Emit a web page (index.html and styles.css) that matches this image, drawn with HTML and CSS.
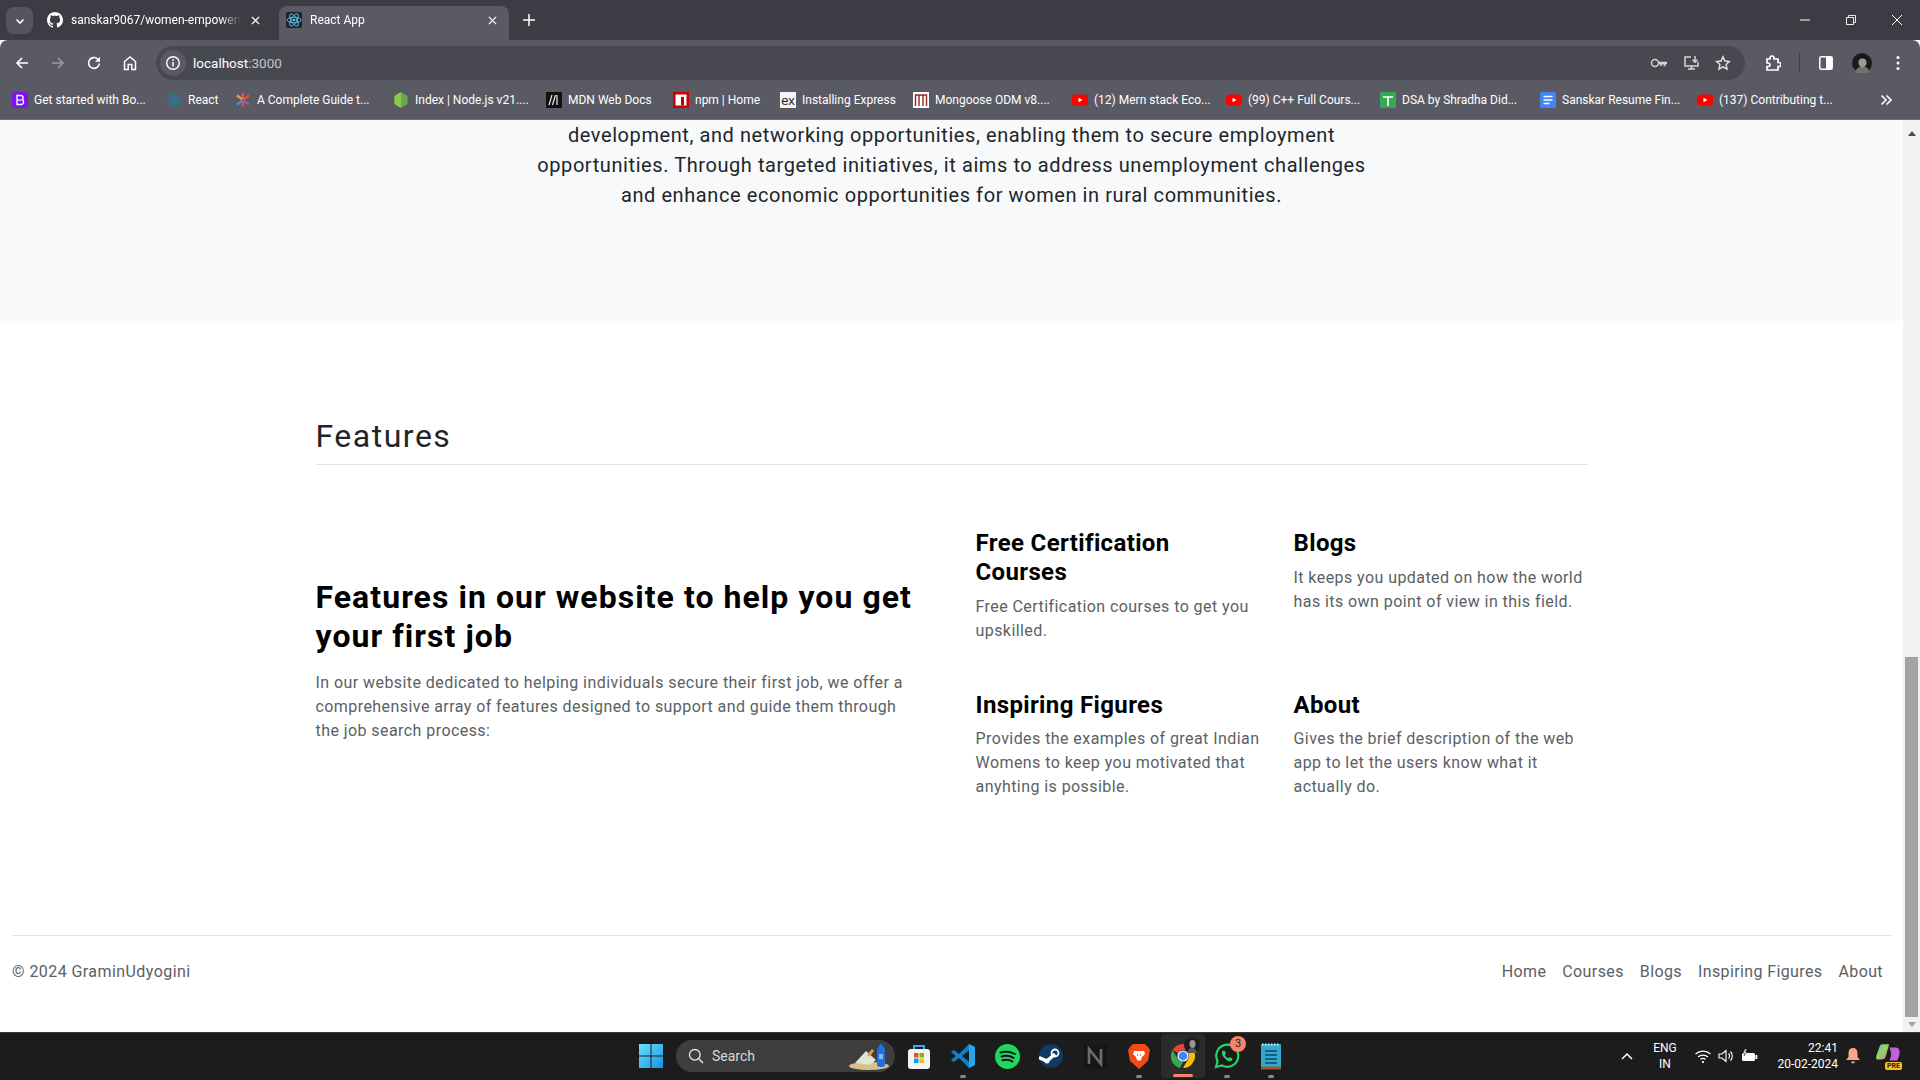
FILE: index.html
```html
<!DOCTYPE html>
<html lang="en">

<head>
    <meta charset="utf-8">
    <title>React App</title>
    <link rel="stylesheet" href="styles.css">
</head>

<body>
    <div class="tabstrip">
        <div class="tablist-btn">
            <svg width="12" height="12" viewBox="0 0 12 12"><path d="M2.5 4.500 6 8l3.500-3.500" fill="none" stroke="#fff" stroke-width="1.600"/></svg>
        </div>
        <div class="tab">
            <svg class="favicon" viewBox="0 0 16 16"><path fill="#fff" d="M8 0C3.600 0 0 3.600 0 8c0 3.500 2.300 6.500 5.500 7.600.4.100.5-.2.5-.4v-1.400c-2.200.5-2.700-1-2.700-1-.4-.9-.9-1.200-.9-1.200-.7-.5.100-.5.100-.5.800.1 1.200.8 1.200.8.700 1.200 1.900.9 2.300.7.100-.5.300-.9.500-1.100-1.800-.2-3.600-.9-3.600-4 0-.9.300-1.600.8-2.100-.1-.2-.4-1 .1-2.100 0 0 .7-.2 2.200.8.600-.2 1.300-.3 2-.3s1.400.1 2 .3c1.500-1 2.200-.8 2.200-.8.400 1.100.2 1.900.1 2.100.5.600.8 1.300.8 2.100 0 3.100-1.900 3.700-3.700 3.900.3.300.6.800.6 1.500v2.200c0 .2.100.5.600.4C13.700 14.500 16 11.500 16 8c0-4.400-3.600-8-8-8z"/></svg>
            <span class="tab-title">sanskar9067/women-empowerment</span>
            <svg class="tab-close" viewBox="0 0 10 10"><path d="M1 1l8 8M9 1 1 9" stroke="#fff" stroke-width="1.400"/></svg>
        </div>
        <div class="tab tab-active">
            <svg class="favicon" viewBox="0 0 16 16"><rect width="16" height="16" rx="2" fill="#20232a"/><g fill="none" stroke="#61dafb" stroke-width=".8"><ellipse cx="8" cy="8" rx="7" ry="2.800"/><ellipse cx="8" cy="8" rx="7" ry="2.800" transform="rotate(60 8 8)"/><ellipse cx="8" cy="8" rx="7" ry="2.800" transform="rotate(120 8 8)"/></g><circle cx="8" cy="8" r="1.300" fill="#61dafb"/></svg>
            <span class="tab-title">React App</span>
            <svg class="tab-close" viewBox="0 0 10 10"><path d="M1 1l8 8M9 1 1 9" stroke="#fff" stroke-width="1.400"/></svg>
        </div>
        <svg class="new-tab" width="12" height="12" viewBox="0 0 12 12"><path d="M6 0v12M0 6h12" stroke="#fff" stroke-width="1.500"/></svg>
        <div class="window-controls">
            <svg width="10" height="10" viewBox="0 0 10 10"><path d="M0 5h10" stroke="#fff"/></svg>
            <svg width="10" height="10" viewBox="0 0 10 10"><path d="M.5 2.500h7v7h-7zM2.500 2.500V.5h7v7h-2" fill="none" stroke="#fff" stroke-width=".9"/></svg>
            <svg width="10" height="10" viewBox="0 0 10 10"><path d="M0 0l10 10M10 0 0 10" stroke="#fff"/></svg>
        </div>
    </div>

    <div class="toolbar">
        <div class="nav-buttons">
            <svg width="16" height="16" viewBox="0 0 16 16"><path d="M14 8H3M8 3 3 8l5 5" fill="none" stroke="#fff" stroke-width="1.600"/></svg>
            <svg width="16" height="16" viewBox="0 0 16 16"><path d="M2 8h11M8 3l5 5-5 5" fill="none" stroke="#9a9aa2" stroke-width="1.600"/></svg>
            <svg width="16" height="16" viewBox="0 0 16 16"><path d="M13.300 8.500A5.400 5.400 0 1 1 11.800 4.200L13.500 6" fill="none" stroke="#fff" stroke-width="1.600"/><path d="M14 1.800v5h-5z" fill="#fff"/></svg>
            <svg width="16" height="16" viewBox="0 0 16 16"><path d="M2.500 14.500V6.500L8 2l5.500 4.500v8H9.800V9.500H6.200v5z" fill="none" stroke="#fff" stroke-width="1.500"/></svg>
        </div>
        <div class="omnibox">
            <div class="site-info">
                <svg width="16" height="16" viewBox="0 0 16 16"><circle cx="8" cy="8" r="6.300" fill="none" stroke="#fff" stroke-width="1.400"/><path d="M8 7v4.500" stroke="#fff" stroke-width="1.500"/><circle cx="8" cy="4.900" r=".9" fill="#fff"/></svg>
            </div>
            <span class="url">localhost<span class="url-port">:3000</span></span>
            <div class="omni-icons">
                <svg width="18" height="16" viewBox="0 0 18 16"><circle cx="5" cy="8" r="3.500" fill="none" stroke="#d4d4d8" stroke-width="1.500"/><path d="M8.500 6.800H17v2.400h-1.500v2h-2v-2H12v1.500h-2V9.200H8.500z" fill="#d4d4d8"/></svg>
                <svg width="17" height="16" viewBox="0 0 17 16"><path d="M8 2H2v9h13V7M5 14h7M8.500 11v3" fill="none" stroke="#d4d4d8" stroke-width="1.500"/><path d="M12 1v6M9.500 4.800 12 7.300l2.500-2.500" fill="none" stroke="#d4d4d8" stroke-width="1.500"/></svg>
                <svg width="16" height="16" viewBox="0 0 16 16"><path d="M8 1.800 9.900 6l4.600.5-3.400 3.100.9 4.500L8 11.800l-4 2.300.9-4.500L1.500 6.500 6.100 6z" fill="none" stroke="#e4e4e8" stroke-width="1.400"/></svg>
            </div>
        </div>
        <div class="toolbar-right">
            <svg class="extension-icon" width="16" height="16" viewBox="0 0 16 16"><path d="M2 4h3V3a2 2 0 0 1 4 0v1h4v3.500h1a2 2 0 0 1 0 4h-1V15H2v-3.500h1.200a1.700 1.700 0 0 0 0-3.500H2z" fill="none" stroke="#fff" stroke-width="1.700"/></svg>
            <span class="toolbar-divider"></span>
            <svg class="panel-icon" width="14" height="16" viewBox="0 0 14 16"><rect x=".8" y="1.800" width="12.400" height="12.400" rx="1.500" fill="none" stroke="#fff" stroke-width="1.500"/><rect x="7" y="2" width="6" height="12" fill="#fff"/></svg>
            <svg class="avatar" width="20" height="20" viewBox="0 0 20 20"><circle cx="10" cy="10" r="10" fill="#1c1b1c"/><path d="M3 20c1-5 4-6.500 7.500-6.500S17 15 17.500 20z" fill="#77716e"/><ellipse cx="10.500" cy="9.500" rx="4" ry="5" fill="#a09894"/><path d="M6 8c0-4 3-5 5-5s4 2 3.500 5c-1-2-2-2.500-4-2.500S7 6 6 8z" fill="#151415"/></svg>
            <svg class="menu-icon" width="4" height="16" viewBox="0 0 4 16"><circle cx="2" cy="2.500" r="1.500" fill="#fff"/><circle cx="2" cy="8" r="1.500" fill="#fff"/><circle cx="2" cy="13.500" r="1.500" fill="#fff"/></svg>
        </div>
    </div>

    <div class="bookmarks">
        <div class="bookmark">
            <svg class="favicon" viewBox="0 0 16 16"><rect width="16" height="16" rx="3" fill="#7a12f2"/><path d="M5 3.500h3.800c3 0 3 3.800.8 4.300 2.800.4 2.800 4.700-.6 4.700H5z" fill="none" stroke="#fff" stroke-width="1.300"/><path d="M5 8h4" stroke="#fff" stroke-width="1.200"/></svg>
            <span>Get started with Bo...</span>
        </div>
        <div class="bookmark">
            <svg class="favicon" viewBox="0 0 16 16"><g fill="none" stroke="#1f7f9f" stroke-width=".9"><ellipse cx="8" cy="8" rx="7" ry="2.800"/><ellipse cx="8" cy="8" rx="7" ry="2.800" transform="rotate(60 8 8)"/><ellipse cx="8" cy="8" rx="7" ry="2.800" transform="rotate(120 8 8)"/></g><circle cx="8" cy="8" r="1.500" fill="#1f7f9f"/></svg>
            <span>React</span>
        </div>
        <div class="bookmark">
            <svg class="favicon" viewBox="0 0 16 16"><g stroke-width="2.200"><path d="M8 1v6.500" stroke="#e8553e"/><path d="M8 8.500V15" stroke="#d0506c"/><path d="M2 3.500 7.300 7.300" stroke="#e8a33e"/><path d="M14 3.500 8.700 7.300" stroke="#e8553e"/><path d="M2 12.500 7.300 8.700" stroke="#3aa0b8"/><path d="M14 12.500 8.700 8.700" stroke="#9a5ab0"/></g></svg>
            <span>A Complete Guide t...</span>
        </div>
        <div class="bookmark">
            <svg class="favicon" viewBox="0 0 16 16"><path d="M8 0 14.500 4v8L8 16l-6.500-4V4z" fill="#6aa84f"/><path d="M8 0v16l-6.500-4V4z" fill="#8cc84b"/></svg>
            <span>Index | Node.js v21....</span>
        </div>
        <div class="bookmark">
            <svg class="favicon" viewBox="0 0 16 16"><rect width="16" height="16" fill="#111"/><path d="M3 13 6 3M6.500 13l3-10M11 3v10" stroke="#e8e8e8" stroke-width="1.200" fill="none"/></svg>
            <span>MDN Web Docs</span>
        </div>
        <div class="bookmark">
            <svg class="favicon" viewBox="0 0 16 16"><rect width="16" height="16" fill="#c00"/><rect x="2.500" y="2.500" width="11" height="11" fill="#fff"/><rect x="8" y="5" width="3" height="8.500" fill="#c00"/></svg>
            <span>npm | Home</span>
        </div>
        <div class="bookmark">
            <svg class="favicon" viewBox="0 0 16 16"><rect width="16" height="16" fill="#f4f4f4"/><text x="8" y="12.500" text-anchor="middle" class="favicon-text">ex</text></svg>
            <span>Installing Express</span>
        </div>
        <div class="bookmark">
            <svg class="favicon" viewBox="0 0 16 16"><rect width="16" height="16" fill="#fff"/><path d="M2.500 14V3h11v11M6 14V3M10 14V3" fill="none" stroke="#8a2a20" stroke-width="1.400"/></svg>
            <span>Mongoose ODM v8....</span>
        </div>
        <div class="bookmark">
            <svg class="favicon" viewBox="0 0 16 16"><rect y="2.500" width="16" height="11" rx="3" fill="#f00"/><path d="M6.500 5.700v4.600L10.500 8z" fill="#fff"/></svg>
            <span>(12) Mern stack Eco...</span>
        </div>
        <div class="bookmark">
            <svg class="favicon" viewBox="0 0 16 16"><rect y="2.500" width="16" height="11" rx="3" fill="#f00"/><path d="M6.500 5.700v4.600L10.500 8z" fill="#fff"/></svg>
            <span>(99) C++ Full Cours...</span>
        </div>
        <div class="bookmark">
            <svg class="favicon" viewBox="0 0 16 16"><rect width="16" height="16" rx="1.500" fill="#34a853"/><path d="M3 5h10M8 5v9" stroke="#fff" stroke-width="1.700"/></svg>
            <span>DSA by Shradha Did...</span>
        </div>
        <div class="bookmark">
            <svg class="favicon" viewBox="0 0 16 16"><rect width="16" height="16" rx="1.500" fill="#4285f4"/><path d="M3.500 4.500h9M3.500 8h9M3.500 11.500h6" stroke="#fff" stroke-width="1.500"/></svg>
            <span>Sanskar Resume Fin...</span>
        </div>
        <div class="bookmark">
            <svg class="favicon" viewBox="0 0 16 16"><rect y="2.500" width="16" height="11" rx="3" fill="#f00"/><path d="M6.500 5.700v4.600L10.500 8z" fill="#fff"/></svg>
            <span>(137) Contributing t...</span>
        </div>
        <svg class="bookmarks-more" width="12" height="12" viewBox="0 0 12 12"><path d="M1.500 1.500 6 6l-4.500 4.500M6.500 1.500 11 6l-4.500 4.500" fill="none" stroke="#fff" stroke-width="1.600"/></svg>
    </div>

    <div class="viewport">
        <div class="page">
            <section class="hero">
                <p class="hero-text">development, and networking opportunities, enabling them to secure employment opportunities. Through targeted initiatives, it aims to address unemployment challenges and enhance economic opportunities for women in rural communities.</p>
            </section>

            <section class="features">
                <h2 class="features-title">Features</h2>
                <div class="features-grid">
                    <div class="features-intro">
                        <h3>Features in our website to help you get your first job</h3>
                        <p>In our website dedicated to helping individuals secure their first job, we offer a comprehensive array of features designed to support and guide them through the job search process:</p>
                    </div>
                    <div class="features-cols">
                        <div class="feature">
                            <h4>Free Certification Courses</h4>
                            <p>Free Certification courses to get you upskilled.</p>
                        </div>
                        <div class="feature">
                            <h4>Blogs</h4>
                            <p>It keeps you updated on how the world has its own point of view in this field.</p>
                        </div>
                        <div class="feature">
                            <h4>Inspiring Figures</h4>
                            <p>Provides the examples of great Indian Womens to keep you motivated that anyhting is possible.</p>
                        </div>
                        <div class="feature">
                            <h4>About</h4>
                            <p>Gives the brief description of the web app to let the users know what it actually do.</p>
                        </div>
                    </div>
                </div>
            </section>

            <footer class="footer">
                <span>© 2024 GraminUdyogini</span>
                <nav class="footer-links">
                    <a>Home</a>
                    <a>Courses</a>
                    <a>Blogs</a>
                    <a>Inspiring Figures</a>
                    <a>About</a>
                </nav>
            </footer>
        </div>
        <div class="scrollbar">
            <span class="arrow-up"></span>
            <div class="scroll-track"><div class="scroll-thumb"></div></div>
            <span class="arrow-down"></span>
        </div>
    </div>

    <div class="taskbar">
        <div class="task-center">
            <svg class="win-logo" width="24" height="24" viewBox="0 0 24 24"><defs><linearGradient id="win" x1="0" y1="0" x2="1" y2="1"><stop offset="0" stop-color="#6fe0ff"/><stop offset="1" stop-color="#1592e6"/></linearGradient></defs><path fill="url(#win)" d="M0 0h11.500v11.500H0zM12.500 0H24v11.500H12.500zM0 12.500h11.500V24H0zM12.500 12.500H24V24H12.500z"/></svg>
            <div class="task-search">
                <svg width="16" height="16" viewBox="0 0 16 16"><circle cx="6.800" cy="6.800" r="5.300" fill="none" stroke="#e8e8e8" stroke-width="1.300"/><path d="M10.800 10.800 15 15" stroke="#e8e8e8" stroke-width="1.400"/></svg>
                <span>Search</span>
                <svg class="search-art" width="44" height="30" viewBox="0 0 44 30"><ellipse cx="20" cy="25" rx="20" ry="4" fill="#d8c08c"/><path d="M6 22 17 10l10 9-6 5z" fill="#dfe6d8"/><path d="M18 14l5-6 2 2-5 6z" fill="#e8a050"/><path d="M28 24V9c0-2 2-3 3-6h2c1 3 3 4 3 6v15c0 1-1 2-4 2s-4-1-4-2z" fill="#1f6fe0"/><rect x="30" y="13" width="4" height="5" fill="#7fb8f4"/></svg>
            </div>
            <div class="task-apps">
                <div class="task-app">
                    <svg width="24" height="26" viewBox="0 0 24 26"><path d="M7 6V3h10v3" fill="none" stroke="#2ab0e6" stroke-width="2"/><rect x="1" y="6" width="22" height="20" rx="3" fill="#f4f4f4"/><rect x="7" y="10" width="4.500" height="4.500" fill="#f25022"/><rect x="12.500" y="10" width="4.500" height="4.500" fill="#7fba00"/><rect x="7" y="15.500" width="4.500" height="4.500" fill="#00a4ef"/><rect x="12.500" y="15.500" width="4.500" height="4.500" fill="#ffb900"/></svg>
                </div>
                <div class="task-app task-app-open">
                    <svg width="26" height="26" viewBox="0 0 26 26"><path d="M19 1 9 11 4 7 1 9l5 4-5 4 3 2 5-4 10 10 6-3V4z" fill="#0f80cc"/><path d="M19 1v24l6-3V4z" fill="#2aa4ee"/><path d="M19 7.500 12 13l7 5.500z" fill="#1c1c1c"/></svg>
                </div>
                <div class="task-app">
                    <svg width="25" height="25" viewBox="0 0 25 25"><circle cx="12.500" cy="12.500" r="12.500" fill="#1ed760"/><path d="M5.500 8.500c5-1.500 10-1 14.500 1.500M6.500 12.500c4.500-1.200 8.500-.7 12 1.300M7.500 16.300c3.500-.9 7-.5 9.800 1.100" fill="none" stroke="#151515" stroke-width="2" stroke-linecap="round"/></svg>
                </div>
                <div class="task-app">
                    <svg width="24" height="24" viewBox="0 0 24 24"><circle cx="12" cy="12" r="12" fill="#0f3a62"/><path d="M0 13.500 8 17l8-7" fill="none" stroke="#fff" stroke-width="3.500"/><circle cx="16" cy="9" r="3.500" fill="none" stroke="#fff" stroke-width="1.800"/><circle cx="8" cy="17" r="2.500" fill="#fff"/></svg>
                </div>
                <div class="task-app">
                    <svg width="24" height="25" viewBox="0 0 24 25"><rect width="24" height="25" rx="2" fill="#161616"/><path d="M6 20V5l12 15V5" fill="none" stroke="#6c6c6c" stroke-width="2.600"/></svg>
                </div>
                <div class="task-app task-app-open">
                    <svg width="22" height="26" viewBox="0 0 22 26"><path d="M5 1h12l3 3 2 3-2 11-9 8-9-8L0 7l2-3z" fill="#f04a18"/><path d="M6 8h10l1 3-3 3-1 3-2 1-2-1-1-3-3-3z" fill="#fff"/><path d="M9 12h1M12 12h1" stroke="#f04a18" stroke-width="1.500"/></svg>
                </div>
                <div class="task-app task-app-active">
                    <svg width="26" height="26" viewBox="0 0 26 26"><path d="M13 1a12 12 0 0 1 10.400 6H13a6 6 0 0 0-5.200 3L2.600 7A12 12 0 0 1 13 1z" fill="#ea4335"/><path d="M23.400 7a12 12 0 0 1-10.400 18l5.200-9A6 6 0 0 0 18.200 10z" fill="#fbbc04"/><path d="M2.600 7l5.200 9a6 6 0 0 0 5.200 3l-3 6A12 12 0 0 1 2.600 7z" fill="#34a853"/><circle cx="13" cy="13" r="5" fill="#4285f4" stroke="#fff" stroke-width="1.200"/></svg>
                    <svg class="chrome-profile" width="16" height="16" viewBox="0 0 16 16"><circle cx="8" cy="8" r="8" fill="#1c1b1c"/><ellipse cx="8.500" cy="7" rx="3" ry="4" fill="#9a9490"/><path d="M3 16c1-4 3-5 5-5s4 1 5 5z" fill="#5a5654"/></svg>
                </div>
                <div class="task-app task-app-open">
                    <svg width="26" height="26" viewBox="0 0 26 26"><path d="M2 24l1.600-6A11 11 0 1 1 8 22.400z" fill="none" stroke="#25d366" stroke-width="2.200"/><path d="M9 7.500c-2 2-1 5 2 8s5.500 3.500 7 2l.5-2-3-1.500-1.200 1.200c-1.500-.6-3-2.200-3.500-3.500l1.200-1.200L10.500 7.500z" fill="#25d366"/></svg>
                    <span class="app-badge">3</span>
                </div>
                <div class="task-app task-app-open">
                    <svg width="20" height="27" viewBox="0 0 20 27"><rect y="1" width="20" height="25" rx="1" fill="#35a8cf"/><rect y="23.500" width="20" height="3" fill="#9a5a2a"/><path d="M1 1.500h18" stroke="#d8f0f8" stroke-width="2" stroke-dasharray="1.500 1.500"/><path d="M4 8h12M4 12h12M4 16h12M4 20h12" stroke="#1a5f80" stroke-width="1.800"/></svg>
                </div>
            </div>
        </div>
        <div class="tray">
            <svg class="tray-chevron" width="12" height="8" viewBox="0 0 12 8"><path d="M1 7l5-5 5 5" fill="none" stroke="#fff" stroke-width="1.500"/></svg>
            <div class="tray-lang"><span>ENG</span><span>IN</span></div>
            <div class="tray-status">
                <svg width="16" height="14" viewBox="0 0 16 14"><path d="M.5 5a11 11 0 0 1 15 0M3 8a7.500 7.500 0 0 1 10 0M5.500 10.500a3.700 3.700 0 0 1 5 0" fill="none" stroke="#fff" stroke-width="1.200"/><circle cx="8" cy="13" r="1.100" fill="#fff"/></svg>
                <svg width="16" height="14" viewBox="0 0 16 14"><path d="M1 5h3l4-3.500v11L4 9H1z" fill="none" stroke="#fff" stroke-width="1.100"/><path d="M10.500 4.500a3.500 3.500 0 0 1 0 5M12.500 2.500a6.500 6.500 0 0 1 0 9" fill="none" stroke="#fff" stroke-width="1.100"/></svg>
                <svg width="17" height="14" viewBox="0 0 17 14"><rect x="1" y="4" width="13" height="8" rx="1.500" fill="#fff"/><rect x="14.500" y="6" width="1.800" height="4" fill="#fff"/><path d="M4 0 2 4h2l-1 3 3-4H4.500L6 0z" fill="#fff" stroke="#1c1c1c" stroke-width=".5"/></svg>
            </div>
            <div class="tray-clock"><span>22:41</span><span>20-02-2024</span></div>
            <svg class="tray-bell" width="14" height="16" viewBox="0 0 14 16"><path d="M7 0c3 0 4.500 2 4.500 5v4L14 12H0l2.500-3V5C2.500 2 4 0 7 0z" fill="#f7a68c"/><path d="M5 13.500h4a2 2 0 0 1-4 0z" fill="#f7a68c"/></svg>
            <div class="tray-copilot">
                <svg width="24" height="22" viewBox="0 0 22 20"><defs><linearGradient id="cop" x1="0" y1="0" x2="1" y2="1"><stop offset="0" stop-color="#3ec8e8"/><stop offset=".5" stop-color="#9ad45a"/><stop offset="1" stop-color="#d868e0"/></linearGradient></defs><path d="M6 1h6l-3 11c-.5 2-2 3-4 3H1C0 15 0 13 .5 11L3 4c.5-2 1.500-3 3-3z" fill="url(#cop)"/><path d="M12 4h6c2 0 3 1 3.500 3 .5 3-.5 6-2 9H12c2-3 3-8 0-12z" fill="#c060e0"/></svg>
                <span class="pre-badge">PRE</span>
            </div>
        </div>
    </div>
</body>

</html>
```
FILE: styles.css
```css
* {
    box-sizing: border-box;
}

html,
body {
    margin: 0;
    height: 100%;
    overflow: hidden;
}

body {
    display: flex;
    flex-direction: column;
    height: 1080px;
    font-family: Roboto, "Liberation Sans", sans-serif;
    background-color: #fff;
}

h2,
h3,
h4,
p {
    margin: 0;
}

.favicon {
    width: 16px;
    height: 16px;
    flex-shrink: 0;
}

.favicon-text {
    font-family: "Liberation Sans", sans-serif;
    font-size: 13px;
    fill: #222;
}

/* tab strip */
.tabstrip {
    display: flex;
    align-items: flex-end;
    height: 40px;
    padding-left: 6px;
    background-color: #3c3c45;
    position: relative;
}

.tablist-btn {
    display: flex;
    align-items: center;
    justify-content: center;
    width: 27px;
    height: 27px;
    margin-bottom: 6px;
    border-radius: 8px;
    background-color: #55555f;
}

.tab {
    display: flex;
    align-items: center;
    width: 243px;
    height: 34px;
    padding: 0 12px 6px 14px;
    color: #fff;
    font-size: 12px;
    border-radius: 8px 8px 0 0;
}

.tab .favicon {
    margin-right: 8px;
}

.tab-title {
    flex: 1;
    overflow: hidden;
    white-space: nowrap;
    margin-right: 10px;
    -webkit-mask-image: linear-gradient(90deg, #000 88%, transparent);
    mask-image: linear-gradient(90deg, #000 88%, transparent);
}

.tab-close {
    width: 9px;
    height: 9px;
    margin-right: 4px;
    flex-shrink: 0;
}

.tab-active {
    width: 230px;
    padding: 0 8px 6px 7px;
    margin-left: 3px;
    background-color: #5a5a65;
}

.new-tab {
    margin: 0 0 14px 14px;
}

.window-controls {
    display: flex;
    gap: 36px;
    position: absolute;
    right: 18px;
    top: 15px;
}

/* toolbar */
.toolbar {
    display: flex;
    align-items: center;
    height: 40px;
    padding: 6px 0 0 14px;
    background-color: #5a5a65;
    border-radius: 8px 8px 0 0;
}

.nav-buttons {
    display: flex;
    gap: 20px;
    align-items: center;
    width: 142px;
}

.omnibox {
    display: flex;
    align-items: center;
    width: 1589px;
    height: 34px;
    padding: 0 14px 0 4px;
    margin-right: 20px;
    border-radius: 17px;
    background-color: #484851;
}

.site-info {
    display: flex;
    align-items: center;
    justify-content: center;
    width: 26px;
    height: 26px;
    border-radius: 13px;
    background-color: #5a5a65;
    margin-right: 7px;
}

.url {
    flex: 1;
    color: #fff;
    font-size: 13.500px;
}

.url-port {
    color: #c4c4ca;
}

.omni-icons {
    display: flex;
    align-items: center;
    gap: 15px;
}

.toolbar-right {
    display: flex;
    align-items: center;
}

.toolbar-divider {
    width: 1px;
    height: 20px;
    margin: 0 19px 0 18px;
    background-color: #3c3c45;
}

.avatar {
    margin: 0 24px 0 19px;
}

/* bookmarks bar */
.bookmarks {
    display: grid;
    grid-template-columns: 154px 69px 158px 153px 127px 107px 133px 159px 154px 154px 160px 157px 183px 1fr;
    align-items: center;
    height: 40px;
    padding: 1px 0 0 12px;
    background-color: #5a5a65;
    border-bottom: 1px solid #6e6e76;
}

.bookmark {
    display: flex;
    align-items: center;
    gap: 6px;
    color: #fff;
    font-size: 12px;
    white-space: nowrap;
}

/* page */
.viewport {
    display: flex;
    flex: 1;
    min-height: 0;
}

.page {
    flex: 1;
    min-width: 0;
    color: #212529;
    letter-spacing: .027em;
}

.hero {
    height: 201px;
    background-color: #f8f9fa;
}

.hero-text {
    width: 840px;
    margin: 0 auto;
    font-size: 20px;
    line-height: 30px;
    letter-spacing: .029em;
    text-align: center;
}

.features {
    width: 1272px;
    margin: 0 auto;
    padding-top: 96px;
}

.features-title {
    padding-bottom: 9px;
    font-size: 32px;
    font-weight: 400;
    line-height: 38px;
    letter-spacing: 1.500px;
    border-bottom: 1px solid #dee2e6;
}

.features-grid {
    display: grid;
    grid-template-columns: 1fr 1fr;
    gap: 48px;
    padding-top: 64px;
}

.features-intro {
    align-self: center;
    padding-bottom: 8px;
}

.features-intro h3 {
    margin-bottom: 15px;
    font-size: 32px;
    line-height: 39px;
    letter-spacing: 1.050px;
    color: #000;
}

.features-intro p {
    padding-right: 12px;
}

.features-intro p,
.feature p {
    font-size: 16px;
    line-height: 24px;
    color: #5b6065;
}

.features-cols {
    display: grid;
    grid-template-columns: 1fr 1fr;
    gap: 48px 24px;
}

.feature h4 {
    margin-bottom: 8px;
    padding-right: 16px;
    font-size: 24px;
    line-height: 28.800px;
    letter-spacing: .015em;
    color: #000;
}

.footer {
    display: flex;
    justify-content: space-between;
    align-items: center;
    margin: 136px 12px 0;
    padding-top: 24px;
    border-top: 1px solid #dee2e6;
    font-size: 16px;
    line-height: 24px;
    color: #5b6065;
}

.footer-links {
    display: flex;
    gap: 16px;
    padding-right: 8px;
    letter-spacing: .024em;
}

/* scrollbar */
.scrollbar {
    display: flex;
    flex-direction: column;
    align-items: center;
    width: 17px;
    background-color: #f1f1f1;
}

.arrow-up {
    margin: 11px 0 5px;
    border: 4px solid transparent;
    border-top: 0;
    border-bottom: 5px solid #505050;
}

.arrow-down {
    margin: 5px 0 5px;
    border: 4px solid transparent;
    border-bottom: 0;
    border-top: 5px solid #a3a3a3;
}

.scroll-track {
    flex: 1;
    display: flex;
    flex-direction: column;
    justify-content: flex-end;
    width: 100%;
    padding: 0 2px;
}

.scroll-thumb {
    height: 360px;
    background-color: #a3a3a3;
}

/* taskbar */
.taskbar {
    display: flex;
    align-items: center;
    height: 48px;
    padding: 0 0 1px 639px;
    background-color: #1c1c1c;
    border-top: 1px solid #3a3a3a;
    color: #fff;
    position: relative;
}

.task-center {
    display: flex;
    align-items: center;
}

.win-logo {
    margin-right: 13px;
}

.task-search {
    display: flex;
    align-items: center;
    width: 219px;
    height: 32px;
    padding: 0 2px 0 12px;
    border-radius: 16px;
    background-color: #3e3e3e;
    font-size: 14px;
    color: #d8d8d8;
}

.task-search span {
    flex: 1;
    margin-left: 8px;
}

.task-apps {
    display: flex;
    margin-left: 2px;
}

.task-app {
    display: flex;
    align-items: center;
    justify-content: center;
    width: 44px;
    height: 44px;
    position: relative;
}

.task-app-open::after {
    content: "";
    position: absolute;
    left: 19px;
    bottom: 0;
    width: 6px;
    height: 3px;
    border-radius: 2px;
    background-color: #8a8a8a;
}

.task-app-active {
    border-radius: 4px;
    background-color: #2b2b2b;
}

.task-app-active::after {
    content: "";
    position: absolute;
    left: 12px;
    bottom: 1px;
    width: 20px;
    height: 3px;
    border-radius: 2px;
    background-color: #f4846c;
}

.chrome-profile {
    position: absolute;
    top: 3px;
    right: 5px;
}

.app-badge {
    position: absolute;
    top: 2px;
    right: 3px;
    width: 16px;
    height: 16px;
    border-radius: 8px;
    background-color: #f4846c;
    color: #1c1c1c;
    font-size: 11px;
    line-height: 16px;
    text-align: center;
}

.tray {
    display: flex;
    align-items: center;
    position: absolute;
    top: 0;
    right: 0;
    height: 46px;
    width: 305px;
    font-size: 12px;
    line-height: 16px;
}

.tray-chevron {
    margin-left: 6px;
}

.tray-lang {
    display: flex;
    flex-direction: column;
    align-items: center;
    width: 30px;
    margin-left: 17px;
}

.tray-status {
    display: flex;
    align-items: center;
    gap: 7px;
    margin-left: 15px;
}

.tray-clock {
    display: flex;
    flex-direction: column;
    align-items: flex-end;
    width: 74px;
    margin-left: 6px;
}

.tray-bell {
    margin-left: 8px;
}

.tray-copilot {
    margin-left: 16px;
    position: relative;
}

.pre-badge {
    position: absolute;
    right: -2px;
    bottom: -1px;
    padding: 0 2px;
    border-radius: 2px;
    background-color: #f8c21c;
    color: #222;
    font-size: 7px;
    font-weight: 700;
    line-height: 8px;
}
```
